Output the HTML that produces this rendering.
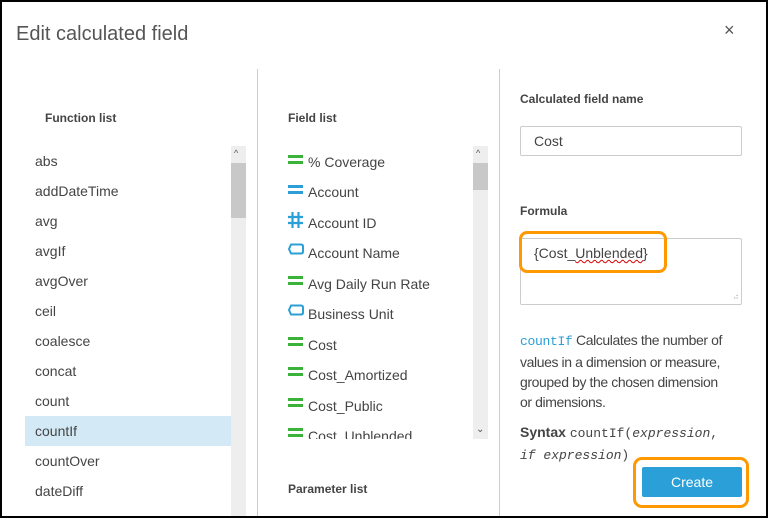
<!DOCTYPE html>
<html><head><style>
*{margin:0;padding:0;box-sizing:border-box}
body{width:768px;height:518px;background:#000;font-family:"Liberation Sans",sans-serif;color:#444;position:relative;overflow:hidden}
.dlg{position:absolute;left:2px;top:2px;width:764px;height:514px;background:#fff;overflow:hidden}
.a{position:absolute;white-space:nowrap}
.lbl{font-size:12px;font-weight:bold;color:#444}
.fn{font-size:14px;left:33px;color:#444}
.sb{position:absolute;background:#eee;width:15px}
.th{position:absolute;left:0;width:15px;background:#c8c8c8}
.ar{position:absolute;left:3px;font-size:9px;color:#555}
svg.i{position:absolute}
</style></head><body><div class="dlg">
<div class="a" style="left:14px;top:21px;font-size:20px;color:#555">Edit calculated field</div>
<div class="a" style="left:722px;top:18px;font-size:18px;color:#555">×</div>
<div class="a" style="left:255px;top:67px;width:1px;height:460px;background:#ccc"></div>
<div class="a" style="left:497px;top:67px;width:1px;height:460px;background:#ccc"></div>

<div class="a lbl" style="left:43px;top:109px">Function list</div>
<div class="a" style="left:23px;top:414px;width:206px;height:30px;background:#d4e9f6"></div>
<div class="a fn" style="top:151px">abs</div>
<div class="a fn" style="top:181px">addDateTime</div>
<div class="a fn" style="top:211px">avg</div>
<div class="a fn" style="top:241px">avgIf</div>
<div class="a fn" style="top:271px">avgOver</div>
<div class="a fn" style="top:301px">ceil</div>
<div class="a fn" style="top:331px">coalesce</div>
<div class="a fn" style="top:361px">concat</div>
<div class="a fn" style="top:391px">count</div>
<div class="a fn" style="top:421px">countIf</div>
<div class="a fn" style="top:451px">countOver</div>
<div class="a fn" style="top:481px">dateDiff</div>
<div class="sb" style="left:229px;top:144px;height:380px"><div class="th" style="top:17px;height:55px"></div><div class="ar" style="top:2px">&#94;</div></div>

<div class="a lbl" style="left:286px;top:109px">Field list</div>
<div class="a" style="left:280px;top:144px;width:190px;height:293px;overflow:hidden">
<div style="position:relative;font-size:14px">
<svg class="i" style="left:6px;top:9px" width="15" height="10"><rect x="0" y="0" width="15" height="3" fill="#3bb33b"/><rect x="0" y="6" width="15" height="3" fill="#3bb33b"/></svg><div class="a" style="left:26px;top:8px">% Coverage</div>
<svg class="i" style="left:6px;top:39px" width="15" height="10"><rect x="0" y="0" width="15" height="3" fill="#2b9fd6"/><rect x="0" y="6" width="15" height="3" fill="#2b9fd6"/></svg><div class="a" style="left:26px;top:38px">Account</div>
<svg class="i" style="left:6px;top:66px" width="15" height="16"><path d="M4.5 0V16M10.5 0V16M0 5H15M0 11H15" stroke="#2b9fd6" stroke-width="2.2" fill="none"/></svg><div class="a" style="left:26px;top:69px">Account ID</div>
<svg class="i" style="left:6px;top:97px" width="16" height="13"><path d="M3 1.5H13Q15 1.5 15 3.5V8.5Q15 10.5 13 10.5H3L1 6Z" stroke="#2b9fd6" stroke-width="2" fill="none" stroke-linejoin="round"/></svg><div class="a" style="left:26px;top:99px">Account Name</div>
<svg class="i" style="left:6px;top:130px" width="15" height="10"><rect x="0" y="0" width="15" height="3" fill="#3bb33b"/><rect x="0" y="6" width="15" height="3" fill="#3bb33b"/></svg><div class="a" style="left:26px;top:130px">Avg Daily Run Rate</div>
<svg class="i" style="left:6px;top:158px" width="16" height="13"><path d="M3 1.5H13Q15 1.5 15 3.5V8.5Q15 10.5 13 10.5H3L1 6Z" stroke="#2b9fd6" stroke-width="2" fill="none" stroke-linejoin="round"/></svg><div class="a" style="left:26px;top:160px">Business Unit</div>
<svg class="i" style="left:6px;top:191px" width="15" height="10"><rect x="0" y="0" width="15" height="3" fill="#3bb33b"/><rect x="0" y="6" width="15" height="3" fill="#3bb33b"/></svg><div class="a" style="left:26px;top:191px">Cost</div>
<svg class="i" style="left:6px;top:221px" width="15" height="10"><rect x="0" y="0" width="15" height="3" fill="#3bb33b"/><rect x="0" y="6" width="15" height="3" fill="#3bb33b"/></svg><div class="a" style="left:26px;top:221px">Cost_Amortized</div>
<svg class="i" style="left:6px;top:252px" width="15" height="10"><rect x="0" y="0" width="15" height="3" fill="#3bb33b"/><rect x="0" y="6" width="15" height="3" fill="#3bb33b"/></svg><div class="a" style="left:26px;top:252px">Cost_Public</div>
<svg class="i" style="left:6px;top:282px" width="15" height="10"><rect x="0" y="0" width="15" height="3" fill="#3bb33b"/><rect x="0" y="6" width="15" height="3" fill="#3bb33b"/></svg><div class="a" style="left:26px;top:282px">Cost_Unblended</div>
</div></div>
<div class="sb" style="left:471px;top:144px;height:293px"><div class="th" style="top:17px;height:27px"></div><div class="ar" style="top:2px">&#94;</div><div class="ar" style="top:278px;font-size:10px">&#8964;</div></div>
<div class="a lbl" style="left:286px;top:480px">Parameter list</div>

<div class="a lbl" style="left:518px;top:90px">Calculated field name</div>
<div class="a" style="left:518px;top:124px;width:222px;height:30px;border:1px solid #ccc;border-radius:2px;font-size:14px;padding:6px 13px">Cost</div>
<div class="a lbl" style="left:518px;top:202px">Formula</div>
<div class="a" style="left:518px;top:236px;width:222px;height:67px;border:1px solid #ccc;border-radius:2px"></div>
<div class="a" style="left:731px;top:290px;font-size:8px;color:#aaa">⠴</div>
<div class="a" style="left:517px;top:229px;width:148px;height:42px;border:3px solid #f90;border-radius:8px"></div>
<div class="a" style="left:532px;top:243px;font-size:14px">{Cost_<span style="text-decoration:underline wavy #d00;text-decoration-thickness:1px">Unblended</span>}</div>
<div class="a" style="left:518px;top:328px;font-size:14px;line-height:20px;color:#444;letter-spacing:-0.4px"><span style="font-family:'Liberation Mono',monospace;color:#2b9fd6;font-size:13px;letter-spacing:-0.3px">countIf</span> Calculates the number of<br>values in a dimension or measure,<br>grouped by the chosen dimension<br>or dimensions.</div>
<div class="a" style="left:518px;top:420px;font-size:14px;line-height:21px;white-space:normal;width:240px"><b>Syntax</b> <span style="font-family:'Liberation Mono',monospace;font-size:13px">countIf(<i>expression</i>,<br><i>if expression</i>)</span></div>
<div class="a" style="left:631px;top:455px;width:116px;height:51px;border:3px solid #f90;border-radius:9px"></div>
<div class="a" style="left:640px;top:465px;width:100px;height:30px;background:#2a9fd8;border-radius:2px;color:#fff;font-size:14px;text-align:center;line-height:30px">Create</div>
</div></body></html>
